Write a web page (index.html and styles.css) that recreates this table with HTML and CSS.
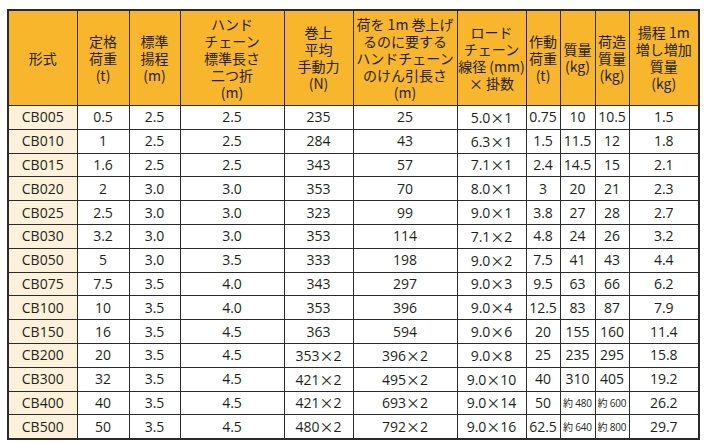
FILE: index.html
```html
<!DOCTYPE html>
<html lang="ja">
<head>
<meta charset="utf-8">
<link rel="stylesheet" href="styles.css">
</head>
<body>
<table class="spec">
<colgroup>
<col class="c69"><col class="c52"><col class="c51"><col class="c104"><col class="c69"><col class="c104"><col class="c69"><col class="c34"><col class="c35"><col class="c34"><col class="c70">
</colgroup>
<thead>
<tr>
<th>形式</th>
<th>定格<br>荷重<br>(t)</th>
<th>標準<br>揚程<br>(m)</th>
<th>ハンド<br>チェーン<br>標準長さ<br>二つ折<br>(m)</th>
<th>巻上<br>平均<br>手動力<br>(N)</th>
<th>荷を 1m 巻上げ<br>るのに要する<br>ハンドチェーン<br>のけん引長さ<br>(m)</th>
<th>ロード<br>チェーン<br>線径 (mm)<br>× 掛数</th>
<th>作動<br>荷重<br>(t)</th>
<th>質量<br>(kg)</th>
<th>荷造<br>質量<br>(kg)</th>
<th>揚程 1m<br>増し増加<br>質量<br>(kg)</th>
</tr>
</thead>
<tbody>
<tr><td class="model">CB005</td><td>0.5</td><td>2.5</td><td>2.5</td><td>235</td><td>25</td><td>5.0<span class="x">×</span>1</td><td>0.75</td><td>10</td><td>10.5</td><td>1.5</td></tr>
<tr><td class="model">CB010</td><td>1</td><td>2.5</td><td>2.5</td><td>284</td><td>43</td><td>6.3<span class="x">×</span>1</td><td>1.5</td><td>11.5</td><td>12</td><td>1.8</td></tr>
<tr><td class="model">CB015</td><td>1.6</td><td>2.5</td><td>2.5</td><td>343</td><td>57</td><td>7.1<span class="x">×</span>1</td><td>2.4</td><td>14.5</td><td>15</td><td>2.1</td></tr>
<tr><td class="model">CB020</td><td>2</td><td>3.0</td><td>3.0</td><td>353</td><td>70</td><td>8.0<span class="x">×</span>1</td><td>3</td><td>20</td><td>21</td><td>2.3</td></tr>
<tr><td class="model">CB025</td><td>2.5</td><td>3.0</td><td>3.0</td><td>323</td><td>99</td><td>9.0<span class="x">×</span>1</td><td>3.8</td><td>27</td><td>28</td><td>2.7</td></tr>
<tr><td class="model">CB030</td><td>3.2</td><td>3.0</td><td>3.0</td><td>353</td><td>114</td><td>7.1<span class="x">×</span>2</td><td>4.8</td><td>24</td><td>26</td><td>3.2</td></tr>
<tr><td class="model">CB050</td><td>5</td><td>3.0</td><td>3.5</td><td>333</td><td>198</td><td>9.0<span class="x">×</span>2</td><td>7.5</td><td>41</td><td>43</td><td>4.4</td></tr>
<tr><td class="model">CB075</td><td>7.5</td><td>3.5</td><td>4.0</td><td>343</td><td>297</td><td>9.0<span class="x">×</span>3</td><td>9.5</td><td>63</td><td>66</td><td>6.2</td></tr>
<tr><td class="model">CB100</td><td>10</td><td>3.5</td><td>4.0</td><td>353</td><td>396</td><td>9.0<span class="x">×</span>4</td><td>12.5</td><td>83</td><td>87</td><td>7.9</td></tr>
<tr><td class="model">CB150</td><td>16</td><td>3.5</td><td>4.5</td><td>363</td><td>594</td><td>9.0<span class="x">×</span>6</td><td>20</td><td>155</td><td>160</td><td>11.4</td></tr>
<tr><td class="model">CB200</td><td>20</td><td>3.5</td><td>4.5</td><td>353<span class="x">×</span>2</td><td>396<span class="x">×</span>2</td><td>9.0<span class="x">×</span>8</td><td>25</td><td>235</td><td>295</td><td>15.8</td></tr>
<tr><td class="model">CB300</td><td>32</td><td>3.5</td><td>4.5</td><td>421<span class="x">×</span>2</td><td>495<span class="x">×</span>2</td><td>9.0<span class="x">×</span>10</td><td>40</td><td>310</td><td>405</td><td>19.2</td></tr>
<tr><td class="model">CB400</td><td>40</td><td>3.5</td><td>4.5</td><td>421<span class="x">×</span>2</td><td>693<span class="x">×</span>2</td><td>9.0<span class="x">×</span>14</td><td>50</td><td class="small">約 480</td><td class="small">約 600</td><td>26.2</td></tr>
<tr><td class="model">CB500</td><td>50</td><td>3.5</td><td>4.5</td><td>480<span class="x">×</span>2</td><td>792<span class="x">×</span>2</td><td>9.0<span class="x">×</span>16</td><td>62.5</td><td class="small">約 640</td><td class="small">約 800</td><td>29.7</td></tr>
</tbody>
</table>
</body>
</html>
```

FILE: styles.css
```css
html, body {
  margin: 0;
  padding: 0;
  background: #ffffff;
}

body {
  padding: 9px 0 0 7px;
  font-family: "Open Sans", "Noto Sans CJK JP", sans-serif;
  color: #231f20;
}

.spec {
  border-collapse: collapse;
  table-layout: fixed;
  width: 692px;
  border: 2px solid #2b2b2b;
}

.c69 { width: 69px; }
.c52 { width: 52px; }
.c51 { width: 51px; }
.c104 { width: 104px; }
.c70 { width: 70px; }
.c34 { width: 34px; }
.c35 { width: 35px; }

.spec th,
.spec td {
  border: 1px solid #2b2b2b;
  padding: 0;
  text-align: center;
  vertical-align: middle;
  white-space: nowrap;
  overflow: hidden;
}

.spec th {
  background: #f8b62d;
  font-family: "Noto Sans CJK JP", sans-serif;
  font-weight: normal;
  font-size: 14px;
  line-height: 17px;
  height: 94px;
}

.spec td {
  font-size: 14px;
  height: 22.8px;
  line-height: 16px;
}

.spec td.model {
  background: #fdf1d9;
}

.spec td.small {
  font-size: 10px;
  letter-spacing: -0.2px;
}

.x {
  font-family: "Noto Sans CJK JP", sans-serif;
  font-size: 14px;
}
```
